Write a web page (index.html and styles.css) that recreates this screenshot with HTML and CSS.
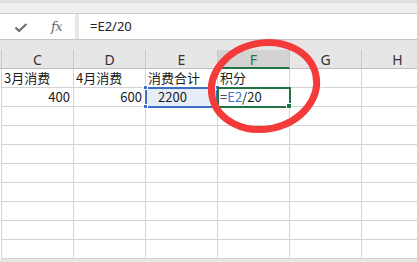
FILE: index.html
```html
<!DOCTYPE html>
<html>
<head>
<meta charset="utf-8">
<link rel="stylesheet" href="styles.css">
</head>
<body>
<div class="app">
  <div class="topband"></div>
  <div class="topband2"></div>
  <div class="fbar">
    <div class="fleft">
      <svg class="check" width="14" height="10" viewBox="0 0 14 10"><polyline points="1.5,4.5 5,8 12.5,1" fill="none" stroke="#6f6f6f" stroke-width="2.2"/></svg>
      <span class="fx">fx</span>
    </div>
    <div class="finput">=E2/20</div>
  </div>
  <div class="gap"></div>
  <div class="sheet">
    <div class="hd stub"></div>
    <div class="hd">C</div>
    <div class="hd">D</div>
    <div class="hd">E</div>
    <div class="hd active">F</div>
    <div class="hd">G</div>
    <div class="hd">H</div>

    <div class="stub"></div>
    <div class="cell">3月消费</div>
    <div class="cell">4月消费</div>
    <div class="cell clip">消费合计</div>
    <div class="cell">积分</div>
    <div class="cell"></div>
    <div class="cell"></div>

    <div class="stub"></div>
    <div class="cell num">400</div>
    <div class="cell num">600</div>
    <div class="cell ref">2200</div>
    <div class="cell edit">=<span class="refc">E2</span>/20</div>
    <div class="cell"></div>
    <div class="cell"></div>

    <div class="stub"></div><div class="cell"></div><div class="cell"></div><div class="cell"></div><div class="cell"></div><div class="cell"></div><div class="cell"></div>
    <div class="stub"></div><div class="cell"></div><div class="cell"></div><div class="cell"></div><div class="cell"></div><div class="cell"></div><div class="cell"></div>
    <div class="stub"></div><div class="cell"></div><div class="cell"></div><div class="cell"></div><div class="cell"></div><div class="cell"></div><div class="cell"></div>
    <div class="stub"></div><div class="cell"></div><div class="cell"></div><div class="cell"></div><div class="cell"></div><div class="cell"></div><div class="cell"></div>
    <div class="stub"></div><div class="cell"></div><div class="cell"></div><div class="cell"></div><div class="cell"></div><div class="cell"></div><div class="cell"></div>
    <div class="stub"></div><div class="cell"></div><div class="cell"></div><div class="cell"></div><div class="cell"></div><div class="cell"></div><div class="cell"></div>
    <div class="stub"></div><div class="cell"></div><div class="cell"></div><div class="cell"></div><div class="cell"></div><div class="cell"></div><div class="cell"></div>
    <div class="stub"></div><div class="cell"></div><div class="cell"></div><div class="cell"></div><div class="cell"></div><div class="cell"></div><div class="cell"></div>

    <div class="refbox"></div>
    <div class="sq sq1"></div>
    <div class="sq sq2"></div>
    <div class="sq sq3"></div>
    <div class="editbox"></div>
    <div class="handle"></div>
    <svg class="circle" width="140" height="120" viewBox="0 0 140 120">
      <ellipse cx="70" cy="58" rx="53" ry="43" fill="none" stroke="#f53a3a" stroke-width="7" transform="rotate(-12 70 58)"/>
    </svg>
  </div>
</div>
</body>
</html>
```

FILE: styles.css
```css
* { box-sizing: border-box; }
html, body { margin: 0; padding: 0; }
body {
  width: 417px;
  height: 262px;
  overflow: hidden;
  background: #e6e6e6;
  font-family: "Noto Sans CJK SC", "Noto Sans", sans-serif;
}
.app { width: 417px; }
.topband { height: 3px; background: #e2e2e2; border-bottom: 1px solid #d6d6d6; }
.topband2 { height: 10px; background: #efefef; }
.fbar {
  display: flex;
  gap: 4px;
  height: 27px;
  background: #e6e6e6;
  border-top: 1px solid #cdcdcd;
  border-bottom: 1px solid #c6c6c6;
}
.fleft {
  width: 75px;
  background: #fff;
  display: flex;
  align-items: center;
  padding-left: 14px;
}
.check { display: block; margin-top: 2px; }
.fx {
  margin-left: 23px;
  font-family: "DejaVu Serif", "Liberation Serif", serif;
  font-style: italic;
  font-size: 13px;
  color: #6a6a6a;
  letter-spacing: -0.5px;
}
.finput {
  flex: 1;
  background: #fff;
  font-family: "Noto Sans", sans-serif;
  font-size: 13px;
  line-height: 25px;
  padding-left: 11px;
  color: #222;
}
.gap { height: 10px; background: #e6e6e6; }
.sheet {
  position: relative;
  display: grid;
  grid-template-columns: 2px repeat(6, 72px);
  grid-auto-rows: 19px;
  background: #fff;
}
.stub { border-right: 1px solid #d4d4d4; background: #fff; }
.hd {
  background: #e6e6e6;
  border-right: 1px solid #c8c8c8;
  border-bottom: 1px solid #bdbdbd;
  font-size: 14px;
  line-height: 16px;
  padding-top: 2px;
  text-align: center;
  color: #333;
  font-family: "Noto Sans", sans-serif;
}
.hd.stub { background: #e6e6e6; }
.hd.active {
  background: #d3d3d3;
  color: #217346;
  border-bottom: 2px solid #217346;
}
.cell {
  border-right: 1px solid #d4d4d4;
  border-bottom: 1px solid #d4d4d4;
  font-size: 13px;
  line-height: 18px;
  padding: 0 2px;
  color: #1a1a1a;
  white-space: nowrap;
  overflow: hidden;
}
.cell.num { text-align: right; padding-right: 3px; }
.cell.ref { background: #e7edf7; padding-left: 12px; }
.cell.edit { padding-left: 2px; }
.refc { color: #3a6fcb; }
.refbox {
  position: absolute;
  left: 145px;
  top: 37px;
  width: 73px;
  height: 21px;
  border: 2px solid #3d6fc8;
  pointer-events: none;
}
.sq {
  position: absolute;
  width: 5px;
  height: 5px;
  background: #3d6fc8;
  border: 1px solid #fff;
}
.sq1 { left: 143px; top: 35px; }
.sq2 { left: 143px; top: 54px; }
.sq3 { left: 215px; top: 35px; }
.editbox {
  position: absolute;
  left: 217px;
  top: 37px;
  width: 74px;
  height: 21px;
  border: 2px solid #217346;
}
.handle {
  position: absolute;
  left: 286px;
  top: 53px;
  width: 6px;
  height: 6px;
  background: #217346;
  border: 1px solid #fff;
}
.circle {
  position: absolute;
  left: 194px;
  top: -22px;
}
```
